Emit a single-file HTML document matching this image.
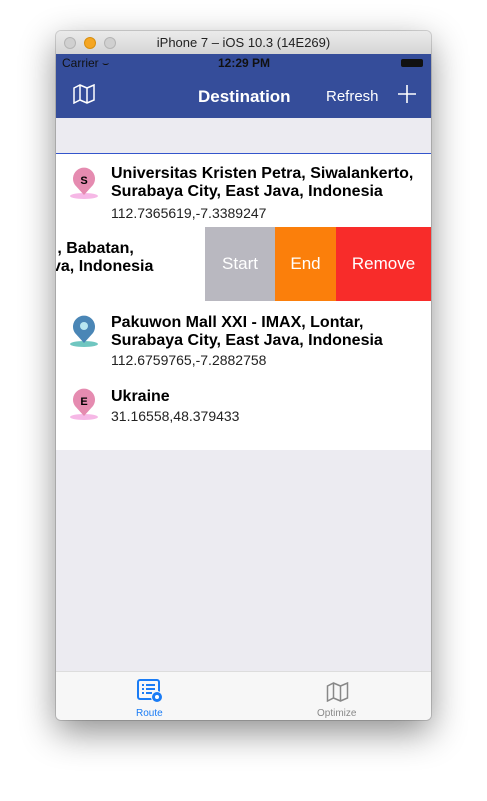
<!DOCTYPE html>
<html><head><style>
body{margin:0;width:487px;height:801px;background:#fff;position:relative;overflow:hidden;font-family:"Liberation Sans",sans-serif}
.win{position:absolute;left:56px;top:31px;width:375px;height:689px;border-radius:5px;overflow:hidden;box-shadow:0 12px 35px rgba(0,0,0,.45),0 0 0 1px rgba(0,0,0,.15);background:#ecebf1}
.title{position:absolute;left:0;top:0;width:375px;height:23px;background:linear-gradient(#ebebeb,#d5d5d5);text-align:center;font-size:13px;line-height:23px;color:#222}
.dot{position:absolute;top:6px;width:12px;height:12px;border-radius:50%;background:#d0d0d0;border:0.5px solid #b5b5b5;box-sizing:border-box}
.nav{position:absolute;left:0;top:23px;width:375px;height:64px;background:#354d9a;color:#fff}
.a{position:absolute;white-space:nowrap}
.row{position:absolute;left:0;width:375px;background:#fff}
.t{font-weight:bold;font-size:16px;line-height:18px;color:#000}
.s{font-size:14px;color:#222;line-height:18px}
.pin{position:absolute;left:13px;width:30px;height:34px}
</style></head><body>
<div class="win">
<div class="title">iPhone 7 – iOS 10.3 (14E269)</div>
<div class="dot" style="left:8px"></div><div class="dot" style="left:28px;background:#f5a623;border-color:#d88f10"></div><div class="dot" style="left:48px"></div>
<div class="nav">
<div class="a" style="left:6px;top:2px;font-size:12px;color:#111">Carrier <span style="font-size:11px">&#x2323;</span></div>
<div class="a" style="left:162px;top:2px;font-size:12px;font-weight:bold;color:#111">12:29 PM</div>
<div class="a" style="left:345px;top:5px;width:22px;height:8px;background:#111;border-radius:2px"></div>
<svg class="a" style="left:17px;top:30px" width="22" height="20" viewBox="0 0 22 20" fill="none" stroke="#fff" stroke-width="1.5"><path d="M1 4 L7 1 L14 4 L21 1 V16 L14 19 L7 16 L1 19 Z M7 1 V16 M14 4 V19"/></svg>
<div class="a" style="left:142px;top:33px;font-size:17px;font-weight:bold">Destination</div>
<div class="a" style="left:270px;top:34px;font-size:15px">Refresh</div>
<svg class="a" style="left:342px;top:31px" width="18" height="18"><path d="M9 0V18M0 9H18" stroke="#fff" stroke-width="1.6"/></svg>
</div>
<div class="a" style="left:0;top:122px;width:375px;height:1px;background:#3355cc"></div>
<div class="row" style="top:123px;height:296px"></div>
<!-- row1 -->
<svg class="pin" style="top:135px" viewBox="0 0 30 34"><ellipse cx="15" cy="30" rx="14" ry="3" fill="#f6b8e6"/><path d="M15 29 L6 19 A11 11 0 1 1 24 19 Z" fill="#e58bb0"/><text x="15" y="18" font-size="11" font-weight="bold" text-anchor="middle" font-family="Liberation Sans">S</text></svg>
<div class="a t" style="left:55px;top:134px">Universitas Kristen Petra, Siwalankerto,<br>Surabaya City, East Java, Indonesia</div>
<div class="a s" style="left:55px;top:173px">112.7365619,-7.3389247</div>
<!-- row2 -->
<div class="a t" style="left:-4px;top:209px">;, Babatan,<br>va, Indonesia</div>
<div class="a" style="left:149px;top:196px;width:70px;height:74px;background:#b9b8c0;color:#fff;font-size:17px;text-align:center;line-height:74px">Start</div>
<div class="a" style="left:219px;top:196px;width:61px;height:74px;background:#fb7f0b;color:#fff;font-size:17px;text-align:center;line-height:74px">End</div>
<div class="a" style="left:280px;top:196px;width:95px;height:74px;background:#f82c2a;color:#fff;font-size:17px;text-align:center;line-height:74px">Remove</div>
<!-- row3 -->
<svg class="pin" style="top:283px" viewBox="0 0 30 34"><ellipse cx="15" cy="30" rx="14" ry="3" fill="#6fc6c0"/><path d="M15 29 L6 19 A11 11 0 1 1 24 19 Z" fill="#4a86b6"/><circle cx="15" cy="12" r="4" fill="#b8e6f0"/></svg>
<div class="a t" style="left:55px;top:283px">Pakuwon Mall XXI - IMAX, Lontar,<br>Surabaya City, East Java, Indonesia</div>
<div class="a s" style="left:55px;top:320px">112.6759765,-7.2882758</div>
<!-- row4 -->
<svg class="pin" style="top:356px" viewBox="0 0 30 34"><ellipse cx="15" cy="30" rx="14" ry="3" fill="#f6b8e6"/><path d="M15 29 L6 19 A11 11 0 1 1 24 19 Z" fill="#e58bb0"/><text x="15" y="18" font-size="11" font-weight="bold" text-anchor="middle" font-family="Liberation Sans">E</text></svg>
<div class="a t" style="left:55px;top:357px">Ukraine</div>
<div class="a s" style="left:55px;top:376px">31.16558,48.379433</div>
<!-- tab bar -->
<div class="a" style="left:0;top:640px;width:375px;height:49px;background:#f7f7f7;border-top:1px solid #ddd"></div>
<svg class="a" style="left:81px;top:648px" width="26" height="24" viewBox="0 0 26 24"><rect x="1" y="1" width="21" height="19" rx="2" fill="none" stroke="#1a7cf5" stroke-width="2"/><path d="M5 6h2M9 6h9M5 10h2M9 10h9M5 14h2M9 14h6" stroke="#1a7cf5" stroke-width="2"/><circle cx="20" cy="18" r="5.5" fill="#1a7cf5" stroke="#f7f7f7" stroke-width="1"/><circle cx="20" cy="18" r="2" fill="#fff"/></svg>
<div class="a" style="left:80px;top:677px;font-size:10px;color:#1a7cf5">Route</div>
<svg class="a" style="left:270px;top:651px" width="23" height="20" viewBox="0 0 22 20" fill="none" stroke="#888" stroke-width="1.5"><path d="M1 4 L7 1 L14 4 L21 1 V16 L14 19 L7 16 L1 19 Z M7 1 V16 M14 4 V19"/></svg>
<div class="a" style="left:261px;top:677px;font-size:10px;color:#888">Optimize</div>
</div>
</body></html>
